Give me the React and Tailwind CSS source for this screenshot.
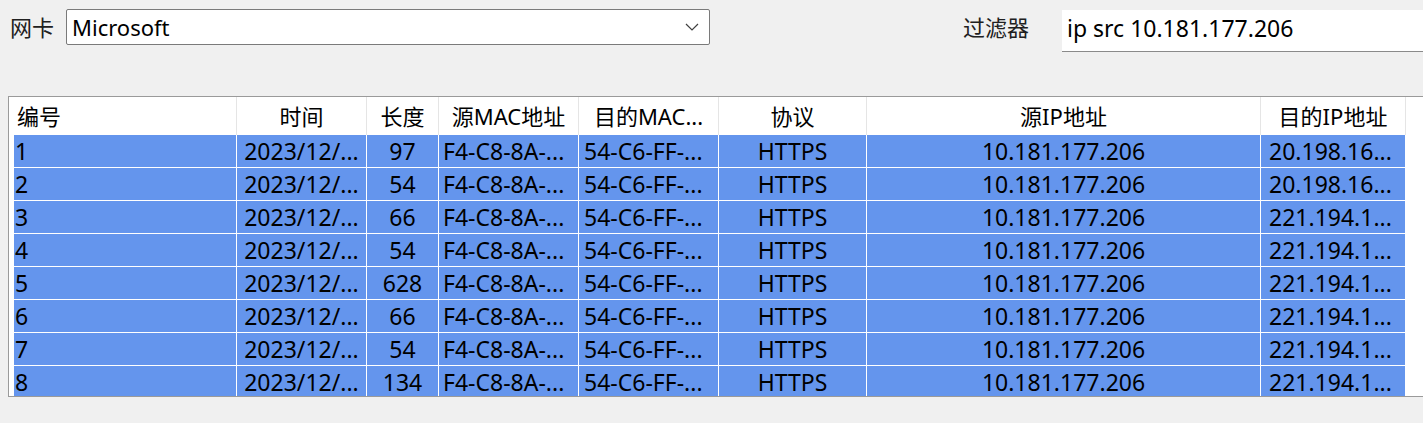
import React from "react";

const headerCols = [
  { title: "编号", w: "w-[228px]", align: "justify-start pl-[8px]" },
  { title: "时间", w: "w-[130px]", align: "justify-center" },
  { title: "长度", w: "w-[72px]", align: "justify-center" },
  { title: "源MAC地址", w: "w-[140px]", align: "justify-center" },
  { title: "目的MAC...", w: "w-[140px]", align: "justify-center" },
  { title: "协议", w: "w-[148px]", align: "justify-center" },
  { title: "源IP地址", w: "w-[394px]", align: "justify-center" },
  { title: "目的IP地址", w: "w-[145px]", align: "justify-center" },
];

const cellWidths = [
  "w-[223px] justify-start pl-[1px]",
  "w-[130px] justify-center",
  "w-[72px] justify-center",
  "w-[140px] justify-start pl-[4px]",
  "w-[140px] justify-start pl-[5px]",
  "w-[148px] justify-center",
  "w-[394px] justify-center",
  "w-[145px] justify-start pl-[8px]",
];

// 抓包结果
const packets = [
  { id: 1, len: 97, dst: "20.198.16..." },
  { id: 2, len: 54, dst: "20.198.16..." },
  { id: 3, len: 66, dst: "221.194.1..." },
  { id: 4, len: 54, dst: "221.194.1..." },
  { id: 5, len: 628, dst: "221.194.1..." },
  { id: 6, len: 66, dst: "221.194.1..." },
  { id: 7, len: 54, dst: "221.194.1..." },
  { id: 8, len: 134, dst: "221.194.1..." },
];

function Chevron() {
  return (
    <svg width="14" height="8" viewBox="0 0 14 8" className="shrink-0">
      <path d="M1 1 L7 7 L13 1" fill="none" stroke="#404040" strokeWidth="1.2" />
    </svg>
  );
}

export default function App() {
  return (
    <div
      className="w-[1423px] h-[423px] overflow-hidden bg-[#f0f0f0] text-[22px] text-black"
      style={{ fontFamily: '"Noto Sans", "Noto Sans CJK SC", sans-serif' }}
    >
      {/* 顶部工具栏 */}
      <div className="flex items-start h-[96px] pt-[9px]">
        <span className="ml-[10px] w-[56px] leading-[36px] text-[#202020]">网卡</span>
        <div className="w-[644px] h-[36px] flex items-center justify-between bg-white border border-[#7a7a7a] rounded-[2px] pl-[5px] pr-[10px]">
          <span className="leading-none">Microsoft</span>
          <Chevron />
        </div>
        <span className="ml-[253px] w-[99px] leading-[36px] text-[#202020]">过滤器</span>
        <div className="flex-1 mt-[1px] h-[42px] flex items-center bg-white border-b border-[#8a8a8a] pl-[5px] pb-[4px] text-[23px]">
          <span className="leading-none">ip src 10.181.177.206</span>
        </div>
      </div>

      {/* 数据包列表 */}
      <div className="ml-[8px] h-[301px] border-l border-y border-[#9a9a9a] overflow-hidden bg-white">
        <div className="flex h-[38px] bg-white">
          {headerCols.map((c) => (
            <div
              key={c.title}
              className={`${c.w} ${c.align} shrink-0 flex items-center border-r border-[#e5e5e5] leading-none`}
            >
              {c.title}
            </div>
          ))}
        </div>
        {packets.map((p) => {
          const cells = [
            p.id,
            "2023/12/...",
            p.len,
            "F4-C8-8A-...",
            "54-C6-FF-...",
            "HTTPS",
            "10.181.177.206",
            p.dst,
          ];
          return (
            <div key={p.id} className="flex h-[33px] pl-[5px] border-b border-white bg-white text-[23px]">
              {cells.map((v, i) => (
                <div
                  key={i}
                  className={`${cellWidths[i]} shrink-0 h-full flex items-center bg-[#6495ed] border-r border-white leading-none whitespace-nowrap overflow-hidden`}
                >
                  {v}
                </div>
              ))}
            </div>
          );
        })}
      </div>
    </div>
  );
}
